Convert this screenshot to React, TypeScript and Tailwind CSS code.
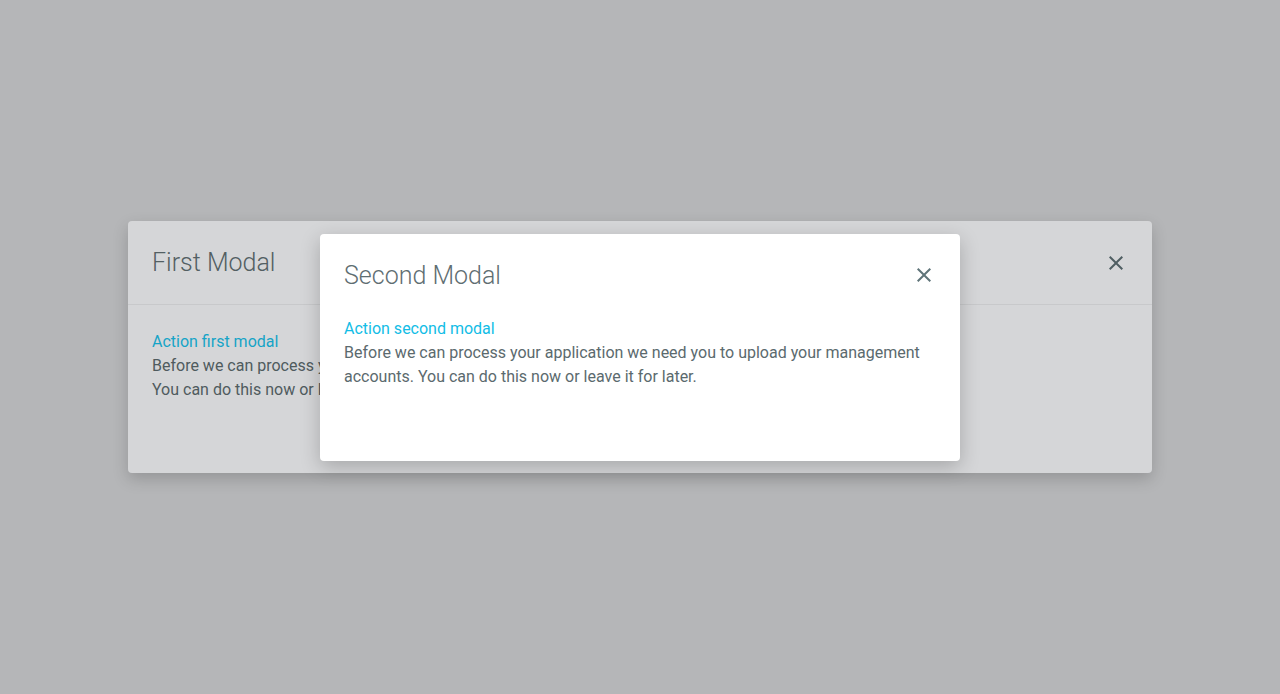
import React from 'react';

function CloseIcon({ color }: { color: string }) {
  return (
    <svg width="24" height="24" viewBox="0 0 24 24" fill={color}>
      <path d="M19 6.41L17.59 5 12 10.59 6.41 5 5 6.41 10.59 12 5 17.59 6.41 19 12 13.41 17.59 19 19 17.59 13.41 12z" />
    </svg>
  );
}

export default function App() {
  return (
    <div className="relative flex h-[694px] w-full items-center justify-center overflow-hidden bg-[#b5b6b8] font-['Roboto',sans-serif]">
      {/* First modal (dimmed behind overlay) */}
      <div className="w-[1024px] rounded bg-[#d5d6d8] shadow-[0_6px_16px_rgba(0,0,0,0.18)]">
        <div className="flex h-[84px] items-center justify-between border-b border-[#c8c9cb] px-6">
          <h2 className="pt-px text-[25px] font-light text-[#535f63]">First Modal</h2>
          <CloseIcon color="#4f5e62" />
        </div>
        <div className="px-6 pt-[25px] pb-[71px] text-base leading-6">
          <div className="text-[#15a4c7]">Action first modal</div>
          <p className="text-[#4f5b5e]">
            Before we can process your application we need you to upload your management accounts.
            <br />
            You can do this now or leave it for later.
          </p>
        </div>
      </div>

      {/* Second modal */}
      <div className="absolute inset-0 flex items-center justify-center">
        <div className="w-[640px] rounded bg-white shadow-[0_6px_20px_rgba(0,0,0,0.22)]">
          <div className="flex h-[83px] items-center justify-between px-6">
            <h2 className="pt-[2px] text-[25px] font-light text-[#5f6e72]">Second Modal</h2>
            <CloseIcon color="#5f7479" />
          </div>
          <div className="px-6 pb-[72px] text-base leading-6">
            <div className="text-[#12bde6]">Action second modal</div>
            <p className="text-[#5b6a6e]">
              Before we can process your application we need you to upload your management accounts. You can do
              this now or leave it for later.
            </p>
          </div>
        </div>
      </div>
    </div>
  );
}
